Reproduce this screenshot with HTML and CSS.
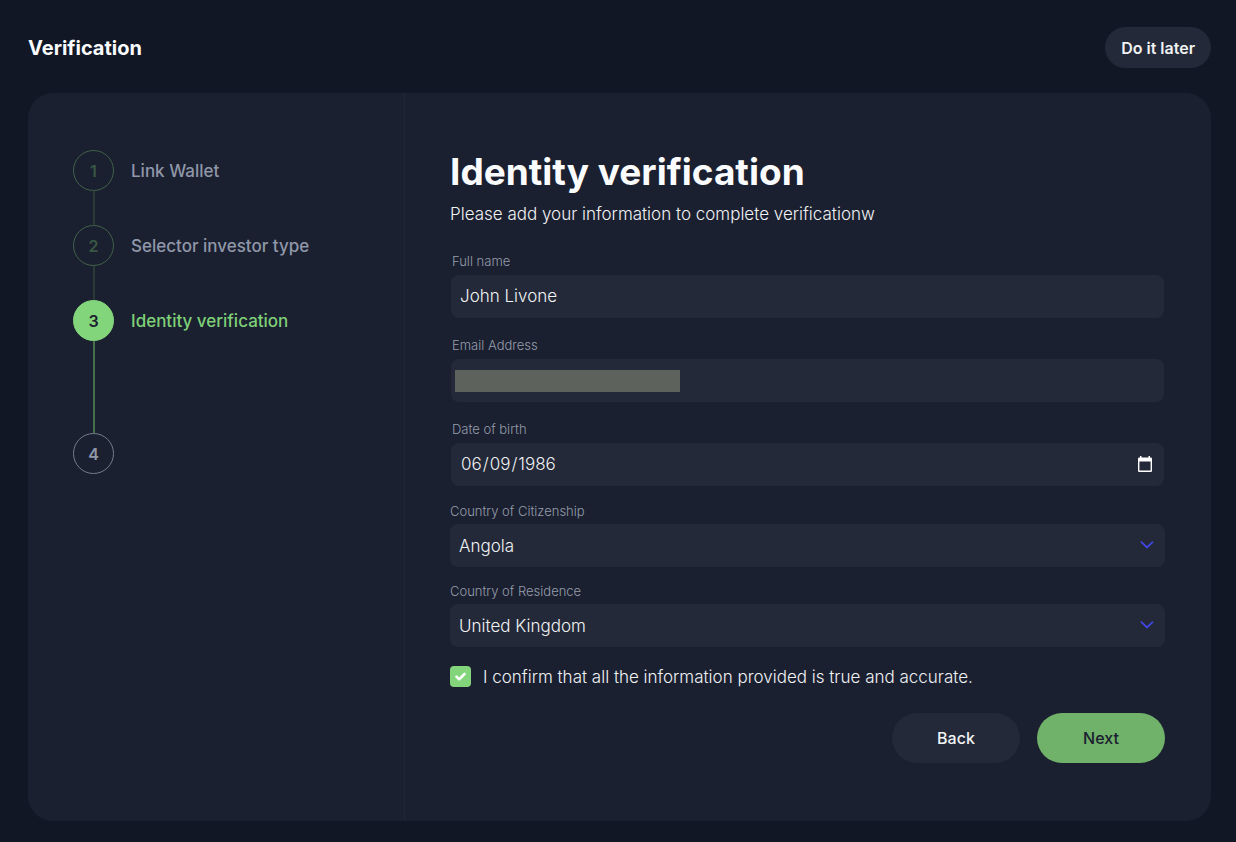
FILE: index.html
```
<!DOCTYPE html>
<html lang="en">
<head>
<meta charset="utf-8">
<meta name="viewport" content="width=device-width, initial-scale=1">
<title>Verification</title>
<link rel="stylesheet" href="styles.css">
</head>
<body>
<header class="topbar">
  <h2 class="topbar-title">Verification</h2>
  <button class="pill pill-small" type="button">Do it later</button>
</header>
<div class="panel">
  <nav class="sidebar" aria-label="Progress">
    <ol class="steps">
      <li class="step step-done"><span class="step-number">1</span><span class="step-label">Link Wallet</span></li>
      <li class="step step-done"><span class="step-number">2</span><span class="step-label">Selector investor type</span></li>
      <li class="step step-active" aria-current="step"><span class="step-number">3</span><span class="step-label">Identity verification</span></li>
      <li class="step"><span class="step-number">4</span></li>
    </ol>
  </nav>
  <main class="content">
    <h1 class="heading">Identity verification</h1>
    <p class="subtitle">Please add your information to complete verificationw</p>
    <form class="form">
      <div class="text-fields">
        <div class="field">
          <label class="field-label" for="name">Full name</label>
          <input class="control" id="name" type="text" value="John Livone">
        </div>
        <div class="field">
          <label class="field-label" for="email">Email Address</label>
          <div class="control-wrap">
            <input class="control" id="email" type="email">
            <span class="redaction"></span>
          </div>
        </div>
        <div class="field">
          <label class="field-label" for="birth">Date of birth</label>
          <div class="control-wrap">
            <input class="control control-date" id="birth" type="date" value="1986-06-09">
            <svg class="calendar" viewBox="0 0 14 16" aria-hidden="true"><path fill="#fff" fill-rule="evenodd" d="M2 0h1.500v1.500h7V0H12v1.500h.7A1.300 1.300 0 0 1 14 2.800v11.900a1.300 1.300 0 0 1-1.300 1.300H1.300A1.300 1.300 0 0 1 0 14.700V2.800a1.300 1.300 0 0 1 1.300-1.300H2zM1.400 5.500v9.100h11.200V5.500z"/></svg>
          </div>
        </div>
      </div>
      <div class="select-fields">
        <div class="field">
          <label class="field-label" for="citizenship">Country of Citizenship</label>
          <div class="control-wrap">
            <select class="control" id="citizenship"><option>Angola</option></select>
            <svg class="chevron" viewBox="0 0 14 8" aria-hidden="true"><path d="M1.500 1.200 7 6.500l5.500-5.300"/></svg>
          </div>
        </div>
        <div class="field">
          <label class="field-label" for="residence">Country of Residence</label>
          <div class="control-wrap">
            <select class="control" id="residence"><option>United Kingdom</option></select>
            <svg class="chevron" viewBox="0 0 14 8" aria-hidden="true"><path d="M1.500 1.200 7 6.500l5.500-5.300"/></svg>
          </div>
        </div>
      </div>
      <label class="confirm">
        <span class="check">
          <input class="check-input" type="checkbox" checked>
          <svg class="check-mark" viewBox="0 0 21 21" aria-hidden="true"><path d="m6.500 10.700 2.700 2.600 5.300-5.300"/></svg>
        </span>
        <span>I confirm that all the information provided is true and accurate.</span>
      </label>
      <div class="actions">
        <button class="pill pill-large" type="button">Back</button>
        <button class="pill pill-large pill-primary" type="submit">Next</button>
      </div>
    </form>
  </main>
</div>
</body>
</html>
```
FILE: styles.css
```
* { box-sizing: border-box; }
body {
  margin: 0;
  min-height: 100vh;
  padding: 27px 25px 21px 28px;
  display: flex;
  flex-direction: column;
  gap: 25px;
  background: #111725;
  color: #f0f2f4;
  font-family: Inter, "Liberation Sans", sans-serif;
  font-size: 17px;
  font-weight: 300;
  line-height: 24px;
}
h1, h2, p, ol { margin: 0; padding: 0; }
button, input, select { font: inherit; color: inherit; }

.topbar { display: flex; justify-content: space-between; align-items: center; }
.topbar-title { font-size: 20px; font-weight: 700; color: #fafbfd; }

.pill { border: 0; background: #232938; text-align: center; cursor: pointer; }
.pill-small { height: 41px; padding: 0 16px; border-radius: 21px; font-size: 16px; font-weight: 600; }
.pill-large { height: 50px; width: 128px; border-radius: 25px; font-size: 16px; font-weight: 500; }
.pill-primary { background: #70b269; color: #1b2030; }

.panel { flex: 1; display: flex; background: #1b2030; border-radius: 25px; }
.sidebar { flex: 0 0 377px; padding: 57px 45px; border-right: 1px solid #212635; }
.steps { list-style: none; }
.step {
  display: grid;
  grid-template-columns: 41px 1fr;
  column-gap: 17px;
  align-items: center;
  color: #8f97a8;
  font-weight: 500;
  font-size: 17px;
}
.step:not(:last-child)::after {
  content: "";
  width: 2px;
  height: 34px;
  justify-self: center;
  background: #283b37;
}
.step-number {
  width: 41px;
  height: 41px;
  display: grid;
  place-items: center;
  border: 1px solid #747c8e;
  border-radius: 50%;
  font-weight: 600;
  font-size: 16px;
}
.step-done .step-number { border-color: #41624a; color: #385843; }
.step-active { color: #7fd077; }
.step-active .step-number { border-color: #83d57b; background: #83d57b; color: #1b2030; }
.step.step-active::after { height: 92px; background: #466f4c; }

.content { flex: 1; min-width: 0; padding: 56px 46px 58px 45px; }
.heading { font-size: 37px; line-height: 46px; font-weight: 700; color: #fafbfd; }
.subtitle { margin-top: 7px; }

.form { margin-top: 25px; }
.text-fields { display: grid; gap: 17px; padding: 0 1px; }
.select-fields { display: grid; gap: 14px; margin-top: 15px; }
.field-label { display: block; line-height: 20px; font-size: 13px; color: #959cab; }
.text-fields .field-label { margin-bottom: 4px; padding-left: 1px; }
.select-fields .field-label { margin-bottom: 3px; }
.control-wrap { position: relative; }
.control {
  display: block;
  width: 100%;
  height: 43px;
  padding: 0 9px;
  border: 0;
  border-radius: 8px;
  background: #232938;
  appearance: none;
}
.text-fields .control { padding-bottom: 1px; }
.control-date::-webkit-calendar-picker-indicator { opacity: 0; }
.redaction { position: absolute; left: 4px; top: 11px; width: 225px; height: 22px; background: #5d625d; }
.calendar { position: absolute; right: 12px; top: 13px; width: 14px; height: 16px; pointer-events: none; }
.chevron {
  position: absolute;
  right: 11px;
  top: 17px;
  width: 14px;
  height: 8px;
  fill: none;
  stroke: #4046e0;
  stroke-width: 1.800;
  stroke-linecap: round;
  stroke-linejoin: round;
  pointer-events: none;
}

.confirm { display: flex; align-items: center; gap: 12px; height: 21px; margin-top: 19px; }
.check { position: relative; width: 21px; height: 21px; }
.check-input { appearance: none; display: block; width: 21px; height: 21px; margin: 0; border-radius: 4px; }
.check-input:checked { background: #83d57b; }
.check-mark {
  position: absolute;
  inset: 0;
  fill: none;
  stroke: #fff;
  stroke-width: 2.600;
  stroke-linecap: round;
  stroke-linejoin: round;
  pointer-events: none;
}
.actions { display: flex; justify-content: flex-end; gap: 17px; margin-top: 26px; }
```
